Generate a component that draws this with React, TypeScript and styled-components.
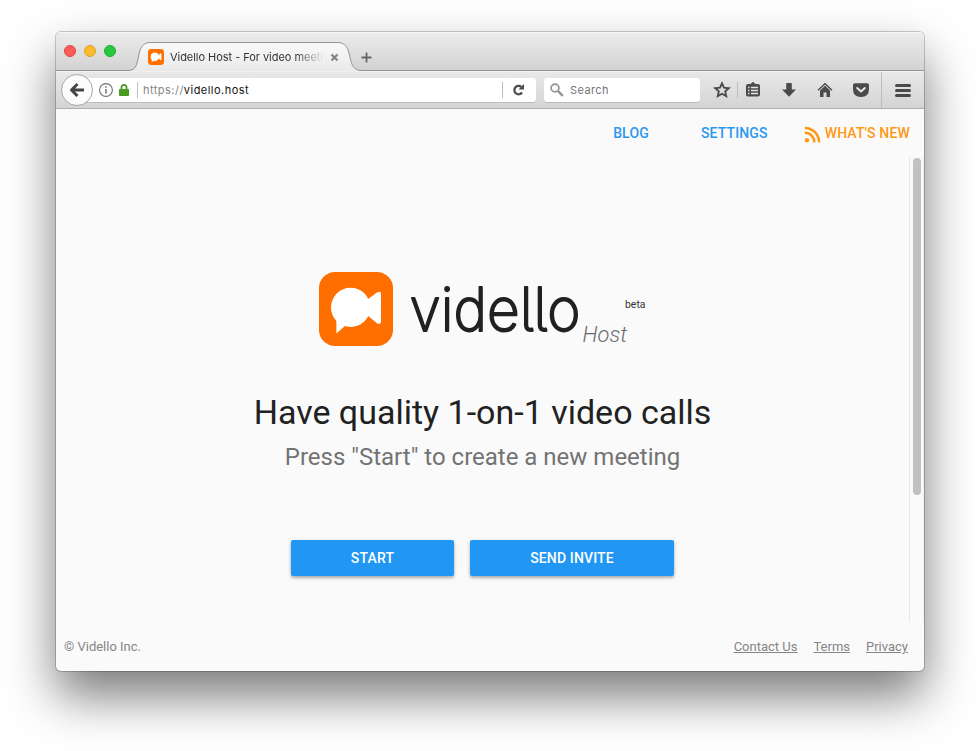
import React from "react";
import styled, { createGlobalStyle } from "styled-components";

const GlobalStyle = createGlobalStyle`
  * { box-sizing: border-box; }
  html, body { margin: 0; background: #fff; }
  body { font-family: Roboto, sans-serif; overflow: hidden; }
`;

const Desktop = styled.div`
  height: 751px;
  padding: 32px 56px 80px;
  background: #fff;
`;

const BrowserWindow = styled.div`
  width: 868px;
  height: 639px;
  display: flex;
  flex-direction: column;
  border-radius: 5px;
  overflow: hidden;
  background: #fafafa;
  box-shadow: 0 0 0 1px rgba(0, 0, 0, 0.2), 0 25px 50px rgba(0, 0, 0, 0.53);
`;

const TitleBar = styled.div`
  flex: none;
  height: 39px;
  display: flex;
  background: linear-gradient(#ececec, #d2d2d2);
  box-shadow: inset 0 1px #f6f6f6, inset 0 -1px #949494;
`;

const Lights = styled.div`
  width: 72px;
  display: flex;
  gap: 8px;
  padding: 13px 0 0 8px;
`;

const Light = styled.span<{ $fill: string; $edge: string }>`
  width: 12px;
  height: 12px;
  border-radius: 50%;
  background: ${(p) => p.$fill};
  border: 1px solid ${(p) => p.$edge};
`;

const Tab = styled.div`
  width: 234px;
  height: 39px;
  display: grid;
  & > * { grid-area: 1 / 1; }
`;

const TabLabel = styled.div`
  display: flex;
  align-items: center;
  padding: 11px 0 0 20px;
  font: 11px Inter, sans-serif;
  color: #333;
`;

const TabTitle = styled.span`
  width: 154px;
  margin: 0 6px 0 6px;
  overflow: hidden;
  white-space: nowrap;
  letter-spacing: -0.04px;
  mask-image: linear-gradient(90deg, #000 125px, transparent 154px);
`;

const NewTab = styled.div`
  padding: 20px 0 0 0;
  margin-left: -1px;
  line-height: 0;
`;

const Toolbar = styled.div`
  flex: none;
  height: 38px;
  display: flex;
  align-items: center;
  background: linear-gradient(#e9e9e9, #d4d4d4);
  border-bottom: 1px solid #afafaf;
  box-shadow: inset 0 1px #f0f0f0;
  font: 11px Inter, sans-serif;
  svg { flex: none; display: block; }
`;

const BackButton = styled.div`
  width: 32px;
  height: 32px;
  margin-left: 5px;
  z-index: 1;
  flex: none;
  display: grid;
  place-items: center;
  border-radius: 50%;
  border: 1px solid #a6a6a6;
  background: #fbfbfb;
`;

const Field = styled.div<{ $width: number; $gap?: number; $joined?: boolean }>`
  width: ${(p) => p.$width}px;
  height: 24px;
  margin-left: ${(p) => p.$gap ?? 0}px;
  padding-left: ${(p) => (p.$joined ? 21 : 6)}px;
  flex: none;
  display: flex;
  align-items: center;
  background: #fff;
  border-radius: ${(p) => (p.$joined ? "0 3px 3px 0" : "3px")};
  box-shadow: 0 1px 0 #bcbcbc;
`;

const Divider = styled.span<{ $left: number; $right: number; $height?: number }>`
  width: 1px;
  height: ${(p) => p.$height ?? 16}px;
  flex: none;
  margin: 0 ${(p) => p.$right}px 0 ${(p) => p.$left}px;
  background: #bdbdbd;
`;

const Address = styled.span`
  flex: 1;
  padding-top: 1px;
  color: #858585;
  letter-spacing: 0.47px;
  b { font-weight: 400; color: #111; }
`;

const SearchText = styled.span`
  margin-left: 6px;
  padding-top: 1px;
  color: #757575;
  letter-spacing: 0.4px;
`;

const Tools = styled.div`
  display: flex;
  align-items: center;
  margin-left: 13px;
`;

const Tool = styled.span<{ $gap?: number }>`
  width: 18px;
  height: 18px;
  margin-left: ${(p) => p.$gap ?? 0}px;
`;

const Page = styled.div`
  flex: 1;
  min-height: 0;
  display: flex;
  flex-direction: column;
  color: #212121;
`;

const Nav = styled.nav`
  height: 48px;
  flex: none;
  display: flex;
  align-items: center;
  justify-content: flex-end;
  padding-right: 14px;
`;

const NavLink = styled.a<{ $accent?: boolean; $gap: number }>`
  display: flex;
  align-items: center;
  gap: 4px;
  margin-left: ${(p) => p.$gap}px;
  font-size: 14px;
  font-weight: 500;
  letter-spacing: 0.15px;
  color: ${(p) => (p.$accent ? "#ff9815" : "#2b98f0")};
  svg { margin-top: 2px; }
`;

const Scroller = styled.div`
  flex: 1;
  display: flex;
`;

const Hero = styled.main`
  flex: 1;
  display: flex;
  flex-direction: column;
  align-items: center;
`;

const Brand = styled.div`
  margin-top: 115px;
  height: 76px;
  svg { display: block; overflow: visible; }
`;

const Headline = styled.h1`
  margin: 42px 0 0;
  font-size: 34px;
  line-height: 44px;
  font-weight: 400;
  white-space: nowrap;
`;

const Subline = styled.p`
  margin: 7px 0 0;
  font-size: 24px;
  line-height: 32px;
  white-space: nowrap;
  color: #737373;
`;

const Actions = styled.div`
  display: flex;
  gap: 16px;
  margin-top: 67px;
`;

const ActionButton = styled.button<{ $width: number }>`
  width: ${(p) => p.$width}px;
  height: 36px;
  padding: 0;
  border: 0;
  border-radius: 2px;
  background: #2196f3;
  color: #fff;
  font: 500 14px Roboto, sans-serif;
  letter-spacing: 0.15px;
  box-shadow: 0 2px 3px rgba(0, 0, 0, 0.26), 0 1px 5px rgba(0, 0, 0, 0.1);
`;

const ScrollTrack = styled.div`
  width: 15px;
  padding: 1px 0 0 3px;
  border-left: 1px solid #e7e7e7;
  border-right: 1px solid #efefef;
`;

const ScrollThumb = styled.div`
  width: 8px;
  height: 337px;
  border-radius: 4px;
  background: #c1c1c1;
`;

const Footer = styled.footer`
  height: 49px;
  flex: none;
  display: flex;
  align-items: center;
  gap: 16px;
  padding: 0 16px 0 8px;
  font-size: 13px;
  color: #858585;
`;

const Copyright = styled.span`
  flex: 1;
`;

const FooterLink = styled.a`
  text-decoration: underline;
`;

const Wordmark = styled.text`
  font-family: Inter, sans-serif;
  font-size: 60.5px;
  font-weight: 200;
  font-feature-settings: "cv05";
  fill: #212121;
  stroke: #212121;
  stroke-width: 1.9px;
  stroke-linejoin: round;
`;

const INK = "#4b4b4b";

const Mark = () => (
  <g>
    <rect width="74" height="74" rx="16" fill="#ff6f00" />
    <g fill="#fff">
      <ellipse cx="31.6" cy="35.4" rx="19.6" ry="19.6" />
      <path d="M17.4 46V61.4L26.5 53.4Z" />
      <path d="M48 27.8 58 20.5Q62 18.3 62 22V49.6Q62 53 58.3 51.6L48 43Z" />
    </g>
  </g>
);

const tools = {
  star: (
    <path d="M9 2.3 11 6.7 15.8 7.2 12.2 10.4 13.2 15.2 9 12.8 4.8 15.2 5.8 10.4 2.2 7.2 7 6.7Z" fill="none" stroke={INK} strokeWidth="1.9" strokeLinejoin="miter" />
  ),
  list: (
    <g>
      <path d="M4 3H6.5L9 .8 11.5 3H14Q16 3 16 5V13.5Q16 15.5 14 15.5H4Q2 15.5 2 13.5V5Q2 3 4 3Z" fill={INK} />
      <path d="M4 6.5H5.5M7 6.5H14M4 9.5H5.5M7 9.5H14M4 12.5H5.5M7 12.5H14" stroke="#e5e5e5" strokeWidth="1.3" />
    </g>
  ),
  download: <path d="M6.2 2.5Q6.2 2 6.8 2H11.2Q11.8 2 11.8 2.5V8.5H16L9 15.7 2 8.5H6.2Z" fill={INK} />,
  home: (
    <g fill={INK}>
      <path d="M4 9.5 9 4.8 14 9.5V16H10.5V11.5H7.5V16H4Z" />
      <path d="M2 9.2 9 2.7 16 9.2" fill="none" stroke={INK} strokeWidth="1.4" />
    </g>
  ),
  pocket: (
    <g>
      <path d="M3 2.2H15Q17 2.2 17 4V8Q17 16 9 16T1 8V4Q1 2.2 3 2.2Z" fill={INK} />
      <path d="M5.2 7 9 10.6 12.8 7" fill="none" stroke="#e5e5e5" strokeWidth="2" strokeLinecap="round" strokeLinejoin="round" />
    </g>
  ),
  menu: <path d="M2.5 4.5H15.5M2.5 9.5H15.5M2.5 14.5H15.5" stroke={INK} strokeWidth="3" strokeLinecap="round" />,
};

const ToolIcon = ({ name, gap }: { name: keyof typeof tools; gap?: number }) => (
  <Tool $gap={gap}>
    <svg width="18" height="18" viewBox="0 0 18 18">{tools[name]}</svg>
  </Tool>
);

export default function App() {
  return (
    <Desktop>
      <GlobalStyle />
      <BrowserWindow>
        <TitleBar>
          <Lights>
            <Light $fill="#fc5b57" $edge="#e2463f" />
            <Light $fill="#fdbc2e" $edge="#e0a028" />
            <Light $fill="#28c940" $edge="#1dad2b" />
          </Lights>
          <Tab>
            <svg width="234" height="39" viewBox="0 0 234 39">
              <defs>
                <linearGradient id="tabFill" x1="0" y1="0" x2="0" y2="1">
                  <stop offset="0" stopColor="#fafafa" />
                  <stop offset="1" stopColor="#e9e9e9" />
                </linearGradient>
              </defs>
              <path d="M0 39V38.5C8 38.5 9 32 10.5 25C12 16 14 10.5 23 10.5H209C218 10.5 220 16 222 25C223.5 32 225 38.5 234 38.5V39Z" fill="url(#tabFill)" />
              <path d="M0 38.5C8 38.5 9 32 10.5 25C12 16 14 10.5 23 10.5H209C218 10.5 220 16 222 25C223.5 32 225 38.5 234 38.5" fill="none" stroke="#929292" />
            </svg>
            <TabLabel>
              <svg width="16" height="16" viewBox="0 0 74 74"><Mark /></svg>
              <TabTitle>Vidello Host - For video meeti</TabTitle>
              <svg width="9" height="9" viewBox="0 0 9 9">
                <path d="M1.5 1.5 7.5 7.5M7.5 1.5 1.5 7.5" stroke="#858585" strokeWidth="2.2" />
              </svg>
            </TabLabel>
          </Tab>
          <NewTab>
            <svg width="11" height="11" viewBox="0 0 11 11">
              <path d="M5.5 .5V10.5M.5 5.5H10.5" stroke="#666" strokeWidth="1.8" />
            </svg>
          </NewTab>
        </TitleBar>

        <Toolbar>
          <BackButton>
            <svg width="16" height="16" viewBox="0 0 16 16">
              <path d="M8.5 2 2.5 8 8.5 14M3 8H15" fill="none" stroke="#444" strokeWidth="3" strokeLinejoin="round" />
            </svg>
          </BackButton>
          <Field $width={458} $gap={-15} $joined>
            <svg width="14" height="14" viewBox="0 0 14 14">
              <circle cx="7" cy="7" r="6.4" fill="none" stroke="#707070" strokeWidth="1.1" />
              <path d="M7 6V10.5M7 3.2V4.8" stroke="#707070" strokeWidth="1.5" />
            </svg>
            <svg width="22" height="14" viewBox="0 0 22 14">
              <path d="M8.5 7V4.5Q8.5 1.8 11 1.8T13.5 4.5V7" fill="none" stroke="#4b9a24" strokeWidth="1.8" />
              <rect x="6" y="6" width="10" height="7" rx=".8" fill="#4b9a24" />
            </svg>
            <Divider $left={2} $right={5} />
            <Address>https://<b>vidello.host</b></Address>
            <Divider $left={0} $right={9} />
            <svg width="24" height="14" viewBox="0 0 24 14">
              <path d="M10 9.5A4.2 4.2 0 1 1 9.3 3.9" fill="none" stroke={INK} strokeWidth="2.2" />
              <path d="M12 1V6.5H6.5Z" fill={INK} />
            </svg>
          </Field>
          <Field $width={156} $gap={8}>
            <svg width="14" height="14" viewBox="0 0 14 14">
              <circle cx="5" cy="5" r="3.9" fill="none" stroke="#919191" strokeWidth="1.7" />
              <path d="M8 8 12.8 12.8" stroke="#919191" strokeWidth="2.4" />
            </svg>
            <SearchText>Search</SearchText>
          </Field>
          <Tools>
            <ToolIcon name="star" />
            <Divider $left={6} $right={6} />
            <ToolIcon name="list" />
            <ToolIcon name="download" gap={18} />
            <ToolIcon name="home" gap={18} />
            <ToolIcon name="pocket" gap={18} />
            <Divider $left={11} $right={12} $height={36} />
            <ToolIcon name="menu" />
          </Tools>
        </Toolbar>

        <Page>
          <Nav>
            <NavLink $gap={0}>BLOG</NavLink>
            <NavLink $gap={52}>SETTINGS</NavLink>
            <NavLink $gap={36} $accent>
              <svg width="17" height="17" viewBox="0 0 17 17">
                <circle cx="3" cy="14.2" r="2.2" fill="currentColor" />
                <path d="M.8 6.8A9.3 9.3 0 0 1 10.3 16.4M.8 2A14 14 0 0 1 15 16.4" fill="none" stroke="currentColor" strokeWidth="2.5" />
              </svg>
              WHAT'S NEW
            </NavLink>
          </Nav>
          <Scroller>
            <Hero>
              <Brand>
                <svg width="327" height="76" viewBox="0 0 327 76">
                  <Mark />
                  <Wordmark x="90.500" y="58.500" textLength="171" lengthAdjust="spacingAndGlyphs">vidello</Wordmark>
                  <text x="263.500" y="70" textLength="44.500" lengthAdjust="spacingAndGlyphs" fontFamily="Roboto" fontSize="22.5" fontWeight="300" fontStyle="italic" fill="#6a6a6a">Host</text>
                  <text x="306" y="36" textLength="20.500" lengthAdjust="spacingAndGlyphs" fontFamily="Roboto" fontSize="11" fill="#333">beta</text>
                </svg>
              </Brand>
              <Headline>Have quality 1-on-1 video calls</Headline>
              <Subline>Press "Start" to create a new meeting</Subline>
              <Actions>
                <ActionButton $width={163}>START</ActionButton>
                <ActionButton $width={204}>SEND INVITE</ActionButton>
              </Actions>
            </Hero>
            <ScrollTrack>
              <ScrollThumb />
            </ScrollTrack>
          </Scroller>
          <Footer>
            <Copyright>© Vidello Inc.</Copyright>
            <FooterLink>Contact Us</FooterLink>
            <FooterLink>Terms</FooterLink>
            <FooterLink>Privacy</FooterLink>
          </Footer>
        </Page>
      </BrowserWindow>
    </Desktop>
  );
}
